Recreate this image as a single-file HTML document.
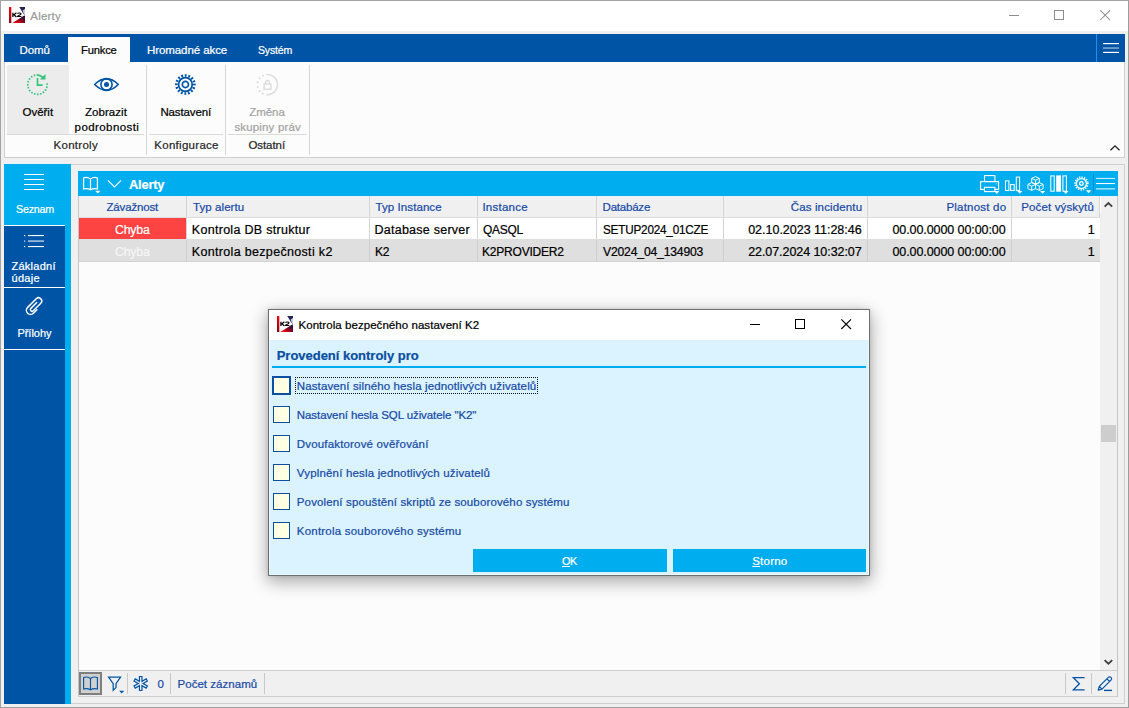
<!DOCTYPE html>
<html lang="cs">
<head>
<meta charset="utf-8">
<title>Alerty</title>
<style>
*{box-sizing:border-box;margin:0;padding:0}
html,body{width:1129px;height:708px;overflow:hidden;background:#f0f0f0}
body{font-family:"Liberation Sans",sans-serif;font-size:12px;color:#000;position:relative}
#app{position:absolute;left:0;top:0;width:1129px;height:708px;background:#f0f0f0;overflow:hidden}
.abs,.t,#app div,#app svg{position:absolute}
.t{white-space:nowrap;line-height:0;display:block;-webkit-text-stroke:0.22px currentColor}
.t u{text-decoration:underline;text-underline-offset:1px}
/* window frame */
.frame{left:0;top:0;width:1129px;height:708px;border:1px solid #a3a3a3;border-right-color:#9c9c9c;border-bottom-color:#9c9c9c;pointer-events:none;z-index:50}
.titlebar{left:1px;top:1px;width:1127px;height:30px;background:#fff}
.tabs{left:4px;top:34px;width:1121px;height:28px;background:#0054a6}
.tabs .active{left:64px;top:3px;width:62px;height:25px;background:#fcfcfc}
.tabs .vsep{left:1092px;top:0;width:1px;height:28px;background:#1e8fff}
.ribbon{left:4px;top:62px;width:1121px;height:96px;background:#fcfcfc;border:1px solid #cfcfcf;border-top:none}
.ribbon .sel{left:2px;top:3px;width:62px;height:69px;background:#ececec}
.ribbon .hl{height:1px;background:#dadada;top:72px}
.ribbon .vl{width:1px;background:#d6d6d6;top:3px;height:90px}
/* sidebar */
.sidebar{left:4px;top:164px;width:67px;height:540px;background:#0054a6}
.sidebar .strip{left:61px;top:0;width:6px;height:540px;background:#00adee}
.sidebar .act{left:0;top:0;width:67px;height:61px;background:#00adee}
.sidebar .wl{left:0;width:61px;height:1px;background:#fff}
/* panel */
.panel{left:71px;top:164px;width:1054px;height:540px;background:#f0f0f0;border:1px solid #cfcfcf;border-left:none}
.grid{left:78px;top:171px;width:1040px;height:526px;background:#fcfcfc;border-left:1px solid #c6c6c6;border-right:1px solid #c6c6c6;border-bottom:1px solid #cfcfcf}
.ghead{left:-1px;top:0;width:1040px;height:25px;background:#00adee}
.chead{left:0;top:25px;width:1021px;height:22px;background:#f0f0f0;border-bottom:1px solid #dcdcdc}
.row1{left:0;top:47px;width:1021px;height:22px;background:#fff;border-bottom:1px solid #dedede}
.row2{left:0;top:69px;width:1021px;height:22px;background:#dfdfdf;border-bottom:1px solid #d2d2d2}
.red{left:0;top:0;width:107px;height:21px;background:#fe4343}
.cs{top:0;width:1px;height:21px;background:#d4d4d4}
.row2 .cs{background:#cfcfcf}
.scroll{left:1021px;top:25px;width:17px;height:474px;background:#f0f0f0}
.scroll .thumb{left:1px;top:229px;width:15px;height:17px;background:#cdcdcd}
.status{left:0;top:499px;width:1038px;height:26px;background:#f0f0f0;border-top:1px solid #cdcdcd}
.status .bk{left:0;top:1px;width:23px;height:23px;background:#d0d0d0;border:2px solid #7e7e7e}
.status .vs{top:2px;width:1px;height:21px;background:#c8c8c8}
/* dialog */
.dialog{left:268px;top:309px;width:602px;height:267px;background:#dbf3fe;border:1px solid #6f6f6f;box-shadow:0 5px 16px 1px rgba(0,0,0,.33),0 0 4px rgba(0,0,0,.12);z-index:20}
.dialog .dtitle{left:0;top:0;width:600px;height:30px;background:#fff}
.dialog .inner{left:0;top:30px;width:600px;height:235px;border:1px solid #e6f9ff;border-top:none;pointer-events:none}
.dialog .rule{left:3px;top:56px;width:594px;height:2px;background:#00adee}
.cb{width:17px;height:17px;left:4px;background:#ffffe1;border:1px solid #0b4ea2}
.cb.foc{width:19px;height:19px;left:3px;border-width:2px}
.focus{left:26px;top:67px;width:243px;height:17px;border:1px dotted #111}
.btn{top:239px;height:23px;background:#00adee}
</style>
</head>
<body>
<div id="app">

<!-- ===== title bar ===== -->
<div class="titlebar">
<svg style="left:8px;top:6px" width="16" height="16" viewBox="0 0 16 16"><defs><linearGradient id="k2r" x1="0" y1="0" x2="0" y2="1"><stop offset="0" stop-color="#ff0008"/><stop offset="1" stop-color="#8a0012"/></linearGradient><linearGradient id="k2b" x1="0" y1="1" x2="1" y2="0"><stop offset="0.2" stop-color="#e8000c"/><stop offset="0.75" stop-color="#3a1038"/></linearGradient></defs><rect width="16" height="16" fill="#fff"/><rect width="2.3" height="16" fill="url(#k2r)"/><polygon points="10.3,0 16,0 16,7.4 14.6,7.2" fill="#232356"/><polygon points="13.6,3.6 16,2 16,7.4 14.8,7" fill="#c9cbe2"/><polygon points="3.4,16 16,16 16,8.6 14.8,8.8" fill="url(#k2b)"/><g fill="none" stroke="#000" stroke-width="1.25" stroke-linejoin="miter"><path d="M3.9,5.8V9.9M7.4,5.8L5.0,7.85L7.4,9.9"/><path d="M8.3,6.5Q8.6,5.95 10.2,5.95Q12.1,5.95 12.0,6.9Q11.9,7.7 10.2,8.2Q8.6,8.7 8.5,9.45H12.4" stroke-width="1.1"/></g></svg>
<span class="t" style="left:29.30px;top:15.00px;font-size:11.5px;color:#9a9a9a;letter-spacing:0.211px">Alerty</span>
<svg style="left:1000px;top:5px" width="120" height="20" viewBox="0 0 120 20"><g stroke="#8c8c8c" stroke-width="1" fill="none" shape-rendering="crispEdges"><path d="M8 9.5H18"/><rect x="53.5" y="4.5" width="9" height="9"/></g><path d="M99.3 4.3L109 14M109 4.3L99.3 14" stroke="#8c8c8c" stroke-width="1.05" fill="none"/></svg>
</div>

<!-- ===== ribbon tabs ===== -->
<div class="tabs">
<div class="active"></div>
<div class="vsep"></div>
<span class="t" style="left:15.50px;top:16.00px;font-size:11.5px;color:#ffffff;letter-spacing:-0.060px">Domů</span>
<span class="t" style="left:76.80px;top:16.00px;font-size:11.5px;color:#000000;letter-spacing:-0.187px;transform:scaleX(0.9730);transform-origin:0 0">Funkce</span>
<span class="t" style="left:143.00px;top:16.00px;font-size:11.5px;color:#ffffff;letter-spacing:-0.082px">Hromadné akce</span>
<span class="t" style="left:253.90px;top:16.00px;font-size:11.5px;color:#ffffff;letter-spacing:-0.189px;transform:scaleX(0.9180);transform-origin:0 0">Systém</span>
<svg style="left:1098px;top:8px" width="18" height="12" viewBox="0 0 18 12"><g fill="#fff"><rect x="1" y="1" width="16" height="1.2"/><rect x="1" y="5.4" width="16" height="1.3" opacity=".6"/><rect x="1" y="9.8" width="16" height="1.2"/></g></svg>
</div>

<!-- ===== ribbon body ===== -->
<div class="ribbon">
<div class="sel"></div>
<div class="hl" style="left:2px;width:137px"></div>
<div class="hl" style="left:144px;width:74px"></div>
<div class="hl" style="left:223px;width:79px"></div>
<div class="vl" style="left:141px"></div>
<div class="vl" style="left:220px"></div>
<div class="vl" style="left:304px"></div>
<svg style="left:0;top:0" width="320" height="96" viewBox="5 62 320 96">
<g stroke="#35c47d" fill="none" stroke-width="1.8"><path d="M47.1,83.4 A9.7,9.7 0 1 1 35.6,75.1" stroke-dasharray="1.5 1.56"/><path d="M37.5,78.1V85.2H42.6" stroke-width="1.7"/><path d="M36.6,74.9Q40.4,75.0 43.2,77.6" stroke-width="1.6"/></g><polygon points="45.5,73.9 45.5,79.6 39.9,79.6" fill="#35c47d"/>
<g stroke="#0054a6" fill="none" stroke-width="1.6"><path d="M94.7,84.5Q106.5,72.9 118.3,84.5Q106.5,96.1 94.7,84.5Z" stroke-linejoin="round"/><circle cx="106.5" cy="84.5" r="5.6"/></g><circle cx="106.5" cy="84.5" r="2.5" fill="#0054a6"/>
<g stroke="#0054a6" fill="none" transform="translate(185.4 84.5)"><circle r="6.85" stroke-width="1.75"/><circle r="3.1" stroke-width="1.65"/><circle r="9.0" stroke-width="2.7" stroke-dasharray="1.8 1.7343" transform="rotate(-5.73)"/></g>
<g stroke="#dddddd" fill="none" stroke-width="1.5"><path d="M266.35,74.61A10.05,10.05 0 1 1 266.35,94.59"/><circle cx="262.99" cy="93.63" r="0.9" fill="#d6d6d6" stroke="none"/><circle cx="259.63" cy="90.98" r="0.9" fill="#d6d6d6" stroke="none"/><circle cx="257.63" cy="86.95" r="0.9" fill="#d6d6d6" stroke="none"/><circle cx="257.63" cy="82.25" r="0.9" fill="#d6d6d6" stroke="none"/><circle cx="259.63" cy="78.22" r="0.9" fill="#d6d6d6" stroke="none"/><circle cx="262.99" cy="75.57" r="0.9" fill="#d6d6d6" stroke="none"/><rect x="264.1" y="84.0" width="6.8" height="5.3"/><path d="M265.6,84V82.3A1.9,1.9 0 0 1 269.4,82.3V84"/></g>
</svg>
<span class="t" style="left:17.50px;top:50.00px;font-size:11.5px;color:#000;letter-spacing:-0.015px">Ověřit</span>
<span class="t" style="left:80.00px;top:50.00px;font-size:11.5px;color:#000;letter-spacing:0.051px">Zobrazit</span>
<span class="t" style="left:69.60px;top:65.00px;font-size:11.5px;color:#000;letter-spacing:0.416px">podrobnosti</span>
<span class="t" style="left:155.40px;top:50.00px;font-size:11.5px;color:#000;letter-spacing:-0.123px">Nastavení</span>
<span class="t" style="left:244.20px;top:50.00px;font-size:11.5px;color:#a3a3a3;letter-spacing:-0.049px">Změna</span>
<span class="t" style="left:229.40px;top:65.00px;font-size:11.5px;color:#a3a3a3;letter-spacing:0.163px">skupiny práv</span>
<span class="t" style="left:48.60px;top:83.00px;font-size:11.5px;color:#262626;letter-spacing:0.266px">Kontroly</span>
<span class="t" style="left:149.30px;top:83.00px;font-size:11.5px;color:#262626;letter-spacing:0.282px">Konfigurace</span>
<span class="t" style="left:243.40px;top:83.00px;font-size:11.5px;color:#262626;letter-spacing:-0.063px">Ostatní</span>
<svg style="left:1104px;top:82px" width="12" height="8" viewBox="0 0 12 8"><path d="M1.5 6.2L6 1.8L10.5 6.2" stroke="#222" stroke-width="1.3" fill="none"/></svg>
</div>

<!-- ===== sidebar ===== -->
<div class="sidebar">
<div class="strip"></div>
<div class="act"></div>
<div class="wl" style="top:61px"></div>
<div class="wl" style="top:123px"></div>
<div class="wl" style="top:185px"></div>
<svg style="left:0;top:0" width="67" height="200" viewBox="4 164 67 200">
<g fill="#fff" shape-rendering="crispEdges"><rect x="24" y="174" width="20" height="1"/><rect x="24" y="179" width="20" height="1"/><rect x="24" y="184" width="20" height="1"/><rect x="24" y="189" width="20" height="1"/></g>
<g fill="#fff"><rect x="24" y="235" width="1.2" height="1.1"/><rect x="28" y="235" width="16" height="1.1"/><rect x="24" y="240.3" width="1.2" height="1.6" opacity=".65"/><rect x="28" y="240.3" width="16" height="1.6" opacity=".65"/><rect x="24" y="246" width="1.2" height="1.1"/><rect x="28" y="246" width="16" height="1.1"/></g>
<g transform="translate(34.2 306.6) rotate(45)" stroke="#fff" stroke-width="1.45" fill="none" stroke-linecap="round"><path d="M4.1,0.3V5.2A4.1,4.1 0 0 1 -4.1,5.2V-7A3.2,3.2 0 0 1 2.3,-7V3.6A1.7,1.7 0 0 1 -1.1,3.6V-4.6"/></g>
</svg>
<span class="t" style="left:11.70px;top:45.00px;font-size:11px;color:#fff;letter-spacing:-0.201px;transform:scaleX(0.9723);transform-origin:0 0">Seznam</span>
<span class="t" style="left:7.50px;top:101.50px;font-size:11px;color:#fff;letter-spacing:0.252px">Základní</span>
<span class="t" style="left:7.50px;top:114.00px;font-size:11px;color:#fff;letter-spacing:0.301px">údaje</span>
<span class="t" style="left:13.40px;top:169.00px;font-size:11px;color:#fff;letter-spacing:-0.023px">Přílohy</span>
</div>

<!-- ===== main panel ===== -->
<div class="panel"></div>
<div class="grid">
 <div class="ghead">
 <svg style="left:0;top:0" width="1040" height="25" viewBox="78 171 1040 25">
<g stroke="#fff" fill="none" stroke-width="1.25"><path d="M90.5,179V189.8M90.5,179Q87,176.6 83.6,178V189Q87,187.8 90.5,189.8Q94,187.8 97.4,189V178Q94,176.6 90.5,179"/><path d="M107.9,180.4L114.5,186.9L121.1,180.4" stroke-width="1.05"/></g><polygon points="95.2,190.7 100.39999999999999,190.7 97.8,193.6" fill="#fff"/>
<g stroke="#fff" fill="none" stroke-width="1.1"><rect x="984.5" y="175.6" width="10.4" height="6"/><rect x="980.6" y="181.6" width="18" height="7.8"/><rect x="984.5" y="187.3" width="10.4" height="4.3" fill="#00adee"/></g><rect x="995.8" y="183.4" width="1.4" height="0.9" fill="#fff" opacity=".7"/><polygon points="994.1999999999999,191.1 999.4,191.1 996.8,194.0" fill="#fff"/>
<g stroke="#fff" fill="none" stroke-width="1.05"><rect x="1005.5" y="180.9" width="3.4" height="9.5"/><rect x="1010.6" y="184.6" width="3.6" height="5.8"/><rect x="1016.3" y="177.1" width="3.3" height="13.3"/></g><polygon points="1017.1,190.9 1022.3000000000001,190.9 1019.7,193.8" fill="#fff"/>
<g stroke="#fff" fill="none" stroke-width="0.95" stroke-linejoin="round"><path d="M1035.5,176.6L1039.3,178.4V182.4L1035.5,184.2L1031.7,182.4V178.4ZM1031.7,178.4L1035.5,180.2L1039.3,178.4M1035.5,180.2V184.2"/><path d="M1031.7,182.6L1035.5,184.4V188.6L1031.7,190.4L1027.9,188.6V184.4ZM1027.9,184.4L1031.7,186.2L1035.5,184.4M1031.7,186.2V190.4"/><path d="M1039.3,182.6L1043.1,184.4V188.6L1039.3,190.4L1035.5,188.6V184.4ZM1035.5,184.4L1039.3,186.2L1043.1,184.4M1039.3,186.2V190.4"/></g><polygon points="1040.0,190.9 1045.1999999999998,190.9 1042.6,193.8" fill="#fff"/>
<g stroke="#fff" fill="none" stroke-width="1.05"><rect x="1050.8" y="175.9" width="3.4" height="15.3"/><rect x="1062.9" y="175.9" width="3.5" height="15.3"/></g><rect x="1056.2" y="175.4" width="4.8" height="16.3" fill="#fff"/><polygon points="1063.2,191.1 1068.3999999999999,191.1 1065.8,194.0" fill="#fff"/>
<g stroke="#fff" fill="none" transform="translate(1081.4 183.5)"><circle r="5.0" stroke-width="1.25"/><circle r="1.85" stroke-width="1.3"/><circle r="6.3" stroke-width="1.9" stroke-dasharray="1.2 1.274" transform="rotate(-5.46)"/></g><polygon points="1086.0,190.3 1091.1999999999998,190.3 1088.6,193.20000000000002" fill="#fff"/>
<rect x="1093" y="173.2" width="1" height="20.4" fill="#0090d2"/>
<g fill="#fff"><rect x="1096" y="177.9" width="19" height="1" opacity=".85"/><rect x="1096" y="183" width="19" height="1.05"/><rect x="1096" y="188.35" width="19" height="1.05" opacity=".9"/></g>
</svg>
 <span class="t" style="left:50.50px;top:14.00px;font-size:13px;color:#fff;letter-spacing:-0.188px;font-weight:700;transform:scaleX(0.9870);transform-origin:0 0">Alerty</span>
 </div>
 <div class="chead">
  <div class="cs" style="left:107px"></div><div class="cs" style="left:290px"></div><div class="cs" style="left:398px"></div><div class="cs" style="left:517px"></div><div class="cs" style="left:644px"></div><div class="cs" style="left:788px"></div><div class="cs" style="left:932px"></div><div class="cs" style="left:1020px"></div>
  <span class="t" style="left:27.50px;top:11.00px;font-size:11.5px;color:#174aa6;letter-spacing:-0.170px">Závažnost</span>
<span class="t" style="left:114.00px;top:11.00px;font-size:11.5px;color:#174aa6;letter-spacing:0.078px">Typ alertu</span>
<span class="t" style="left:296.50px;top:11.00px;font-size:11.5px;color:#174aa6;letter-spacing:0.081px">Typ Instance</span>
<span class="t" style="left:403.40px;top:11.00px;font-size:11.5px;color:#174aa6;letter-spacing:0.260px">Instance</span>
<span class="t" style="left:523.60px;top:11.00px;font-size:11.5px;color:#174aa6;letter-spacing:-0.219px">Databáze</span>
<span class="t" style="left:711.70px;top:11.00px;font-size:11.5px;color:#174aa6;letter-spacing:0.143px">Čas incidentu</span>
<span class="t" style="left:867.40px;top:11.00px;font-size:11.5px;color:#174aa6;letter-spacing:0.216px">Platnost do</span>
<span class="t" style="left:942.30px;top:11.00px;font-size:11.5px;color:#174aa6;letter-spacing:0.129px">Počet výskytů</span>
 </div>
 <div class="row1">
  <div class="red"></div>
  <div class="cs" style="left:107px"></div><div class="cs" style="left:290px"></div><div class="cs" style="left:398px"></div><div class="cs" style="left:517px"></div><div class="cs" style="left:644px"></div><div class="cs" style="left:788px"></div><div class="cs" style="left:932px"></div>
  <span class="t" style="left:35.70px;top:12.00px;font-size:12.5px;color:#fff;letter-spacing:-0.226px;transform:scaleX(0.9865);transform-origin:0 0">Chyba</span>
<span class="t" style="left:112.80px;top:12.00px;font-size:12.5px;color:#000;letter-spacing:0.291px">Kontrola DB struktur</span>
<span class="t" style="left:295.50px;top:12.00px;font-size:12.5px;color:#000;letter-spacing:0.247px">Database server</span>
<span class="t" style="left:404.40px;top:12.00px;font-size:12.5px;color:#000;letter-spacing:-0.270px;transform:scaleX(0.9538);transform-origin:0 0">QASQL</span>
<span class="t" style="left:523.60px;top:12.00px;font-size:12.5px;color:#000;letter-spacing:-0.205px;transform:scaleX(0.9364);transform-origin:0 0">SETUP2024_01CZE</span>
<span class="t" style="left:669.20px;top:12.00px;font-size:12.5px;color:#000;letter-spacing:-0.017px">02.10.2023 11:28:46</span>
<span class="t" style="left:813.50px;top:12.00px;font-size:12.5px;color:#000;letter-spacing:-0.086px">00.00.0000 00:00:00</span>
<span class="t" style="left:1008.70px;top:12.00px;font-size:12.5px;color:#000;letter-spacing:0.000px">1</span>
 </div>
 <div class="row2">
  <div class="cs" style="left:107px"></div><div class="cs" style="left:290px"></div><div class="cs" style="left:398px"></div><div class="cs" style="left:517px"></div><div class="cs" style="left:644px"></div><div class="cs" style="left:788px"></div><div class="cs" style="left:932px"></div>
  <span class="t" style="left:35.70px;top:12.00px;font-size:12.5px;color:#f6f6f6;letter-spacing:-0.226px;transform:scaleX(0.9865);transform-origin:0 0">Chyba</span>
<span class="t" style="left:112.80px;top:12.00px;font-size:12.5px;color:#000;letter-spacing:0.324px">Kontrola bezpečnosti k2</span>
<span class="t" style="left:295.50px;top:12.00px;font-size:12.5px;color:#000;letter-spacing:-0.358px;transform:scaleX(0.9657);transform-origin:0 0">K2</span>
<span class="t" style="left:403.40px;top:12.00px;font-size:12.5px;color:#000;letter-spacing:-0.216px;transform:scaleX(0.9607);transform-origin:0 0">K2PROVIDER2</span>
<span class="t" style="left:523.60px;top:12.00px;font-size:12.5px;color:#000;letter-spacing:-0.189px;transform:scaleX(0.9741);transform-origin:0 0">V2024_04_134903</span>
<span class="t" style="left:669.20px;top:12.00px;font-size:12.5px;color:#000;letter-spacing:-0.069px">22.07.2024 10:32:07</span>
<span class="t" style="left:813.50px;top:12.00px;font-size:12.5px;color:#000;letter-spacing:-0.086px">00.00.0000 00:00:00</span>
<span class="t" style="left:1008.70px;top:12.00px;font-size:12.5px;color:#000;letter-spacing:0.000px">1</span>
 </div>
 <div class="scroll">
  <div style="left:0;top:0;width:1px;height:17px;background:#fff"></div>
  <div class="thumb"></div>
  <svg style="left:2px;top:5px" width="12" height="8" viewBox="0 0 12 8"><path d="M2.6 5.7L6.4 2.1L10.2 5.7" stroke="#3f3f3f" stroke-width="1.8" fill="none"/></svg>
  <svg style="left:2px;top:462px" width="12" height="8" viewBox="0 0 12 8"><path d="M2.6 2.1L6.4 5.7L10.2 2.1" stroke="#3f3f3f" stroke-width="1.8" fill="none"/></svg>
 </div>
 <div class="status">
  <div class="bk"></div>
  <div class="vs" style="left:48px"></div><div class="vs" style="left:91px"></div><div class="vs" style="left:185px"></div>
  <div class="vs" style="left:986px"></div><div class="vs" style="left:1012px"></div>
  <svg style="left:0;top:0" width="1038" height="25" viewBox="79 671 1038 25">
<g stroke="#0054a6" fill="none" stroke-width="1.15"><path d="M90.5,678.4V690.2M90.5,678.4Q87,676.2 83.6,677.5V689Q87,687.8 90.5,689.8Q94,687.8 97.4,689V677.5Q94,676.2 90.5,678.4"/></g>
<g stroke="#0054a6" fill="none" stroke-width="1.25" stroke-linejoin="miter"><path d="M108.6,677H120.6L116,683.6V687.6L113.2,690.3V683.6Z"/></g><polygon points="119.2,690.8 124.2,690.8 121.7,693.5999999999999" fill="#0054a6"/>
<g transform="translate(140.7 683.5)"><g stroke="#0054a6" stroke-width="3.7" stroke-linecap="butt"><path d="M0,-7.6V7.6M-6.6,-3.8L6.6,3.8M-6.6,3.8L6.6,-3.8"/></g><g stroke="#f0f0f0" stroke-width="1.3"><path d="M0,-6.5V6.5M-5.6,-3.25L5.6,3.25M-5.6,3.25L5.6,-3.25"/></g></g>
<g stroke="#0054a6" fill="none" stroke-width="1.3"><path d="M1084.6,677.6H1073.4L1079.4,683.7L1073.4,689.8H1084.6"/></g>
<g stroke="#0054a6" fill="none" stroke-width="1.2" stroke-linejoin="round"><path d="M1098.2,690.2L1099.3,686.4L1108.3,677.4A1.9,1.9 0 0 1 1111,680.1L1102,689.1ZM1099.3,686.4L1102,689.1M1106.9,678.8L1109.6,681.5"/><path d="M1104,690.4H1112" stroke-width="1.4"/></g>
</svg>
  <span class="t" style="left:78.50px;top:13.00px;font-size:11.5px;color:#174aa6;letter-spacing:0.000px">0</span>
<span class="t" style="left:98.50px;top:13.00px;font-size:11.5px;color:#174aa6;letter-spacing:0.036px">Počet záznamů</span>
 </div>
</div>

<!-- ===== dialog ===== -->
<div class="dialog">
 <div class="dtitle">
 <svg style="left:8px;top:6px" width="16" height="16" viewBox="0 0 16 16"><defs><linearGradient id="k2r" x1="0" y1="0" x2="0" y2="1"><stop offset="0" stop-color="#ff0008"/><stop offset="1" stop-color="#8a0012"/></linearGradient><linearGradient id="k2b" x1="0" y1="1" x2="1" y2="0"><stop offset="0.2" stop-color="#e8000c"/><stop offset="0.75" stop-color="#3a1038"/></linearGradient></defs><rect width="16" height="16" fill="#fff"/><rect width="2.3" height="16" fill="url(#k2r)"/><polygon points="10.3,0 16,0 16,7.4 14.6,7.2" fill="#232356"/><polygon points="13.6,3.6 16,2 16,7.4 14.8,7" fill="#c9cbe2"/><polygon points="3.4,16 16,16 16,8.6 14.8,8.8" fill="url(#k2b)"/><g fill="none" stroke="#000" stroke-width="1.25" stroke-linejoin="miter"><path d="M3.9,5.8V9.9M7.4,5.8L5.0,7.85L7.4,9.9"/><path d="M8.3,6.5Q8.6,5.95 10.2,5.95Q12.1,5.95 12.0,6.9Q11.9,7.7 10.2,8.2Q8.6,8.7 8.5,9.45H12.4" stroke-width="1.1"/></g></svg>
 <svg style="left:475px;top:4px" width="120" height="20" viewBox="0 0 120 20"><g stroke="#000" stroke-width="1" fill="none" shape-rendering="crispEdges"><path d="M6 10.5H16"/><rect x="51.5" y="5.5" width="9" height="9"/></g><path d="M97.3 5.3L107 15M107 5.3L97.3 15" stroke="#000" stroke-width="1.1" fill="none"/></svg>
 </div>
 <div class="inner"></div>
 <div class="rule"></div>
 <div class="cb foc" style="top:66px"></div>
 <div class="focus"></div>
 <div class="cb" style="top:96px"></div>
 <div class="cb" style="top:125px"></div>
 <div class="cb" style="top:154px"></div>
 <div class="cb" style="top:183px"></div>
 <div class="cb" style="top:212px"></div>
 <div class="btn" style="left:204px;width:194px"></div>
 <div class="btn" style="left:404px;width:193px"></div>
 <span class="t" style="left:29.50px;top:15.00px;font-size:11.5px;color:#000;letter-spacing:0.054px">Kontrola bezpečného nastavení K2</span>
<span class="t" style="left:7.70px;top:46.00px;font-size:13px;color:#0b4ea2;letter-spacing:-0.017px;font-weight:700">Provedení kontroly pro</span>
<span class="t" style="left:27.80px;top:76.00px;font-size:11.5px;color:#174aa6;letter-spacing:0.121px">Nastavení silného hesla jednotlivých uživatelů</span>
<span class="t" style="left:27.80px;top:105.00px;font-size:11.5px;color:#174aa6;letter-spacing:-0.079px">Nastavení hesla SQL uživatele &quot;K2&quot;</span>
<span class="t" style="left:27.80px;top:134.00px;font-size:11.5px;color:#174aa6;letter-spacing:0.170px">Dvoufaktorové ověřování</span>
<span class="t" style="left:27.80px;top:163.00px;font-size:11.5px;color:#174aa6;letter-spacing:0.175px">Vyplnění hesla jednotlivých uživatelů</span>
<span class="t" style="left:27.80px;top:192.00px;font-size:11.5px;color:#174aa6;letter-spacing:0.139px">Povolení spouštění skriptů ze souborového systému</span>
<span class="t" style="left:27.80px;top:221.00px;font-size:11.5px;color:#174aa6;letter-spacing:0.213px">Kontrola souborového systému</span>
<span class="t" style="left:293.30px;top:251.00px;font-size:11.5px;color:#fff;letter-spacing:-0.424px;transform:scaleX(0.9442);transform-origin:0 0"><u>O</u>K</span>
<span class="t" style="left:483.20px;top:251.00px;font-size:11.5px;color:#fff;letter-spacing:0.223px"><u>S</u>torno</span>
</div>

<div class="frame"></div>
</div>
</body>
</html>
